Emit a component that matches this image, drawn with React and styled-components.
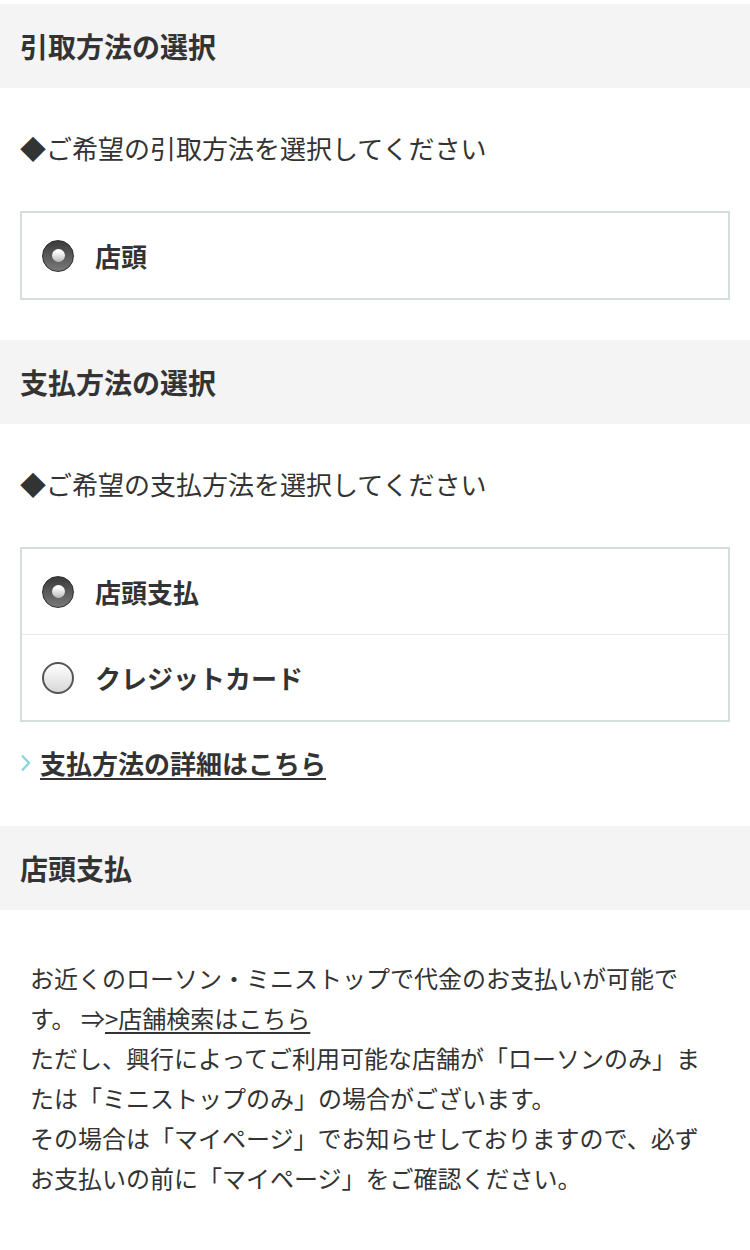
import React, { useState } from 'react'
import styled, { createGlobalStyle } from 'styled-components'

const GlobalStyle = createGlobalStyle`
  body {
    margin: 0;
    background: #fff;
    color: #333;
    font-family: "Noto Sans CJK JP", "Noto Sans", sans-serif;
  }
`

const Page = styled.div`
  padding-top: 4px;
  width: 750px;
`

const SectionHeader = styled.h2`
  margin: 0;
  height: 84px;
  padding: 0 20px;
  display: flex;
  align-items: center;
  background: #f4f4f4;
  font-size: 28px;
  font-weight: 700;
  color: #333;
`

const Prompt = styled.p`
  margin: 0;
  padding: 40px 20px 44px;
  font-size: 26px;
  line-height: 39px;
  font-weight: 400;
  color: #333;
`

const OptionBox = styled.div`
  margin: 0 20px ${(p) => (p.$last ? '40px' : '21px')};
  border: 2px solid #d3dedd;
  display: flex;
  flex-direction: column;
`

const OptionRow = styled.label`
  height: 85px;
  padding: 0 20px;
  display: flex;
  align-items: center;
  gap: 21px;
  font-size: 26px;
  font-weight: 700;
  color: #333;
  cursor: pointer;

  & + & {
    border-top: 1px solid #ebebeb;
  }
`

const Radio = styled.span`
  width: 32px;
  height: 32px;
  box-sizing: border-box;
  border-radius: 50%;
  display: flex;
  align-items: center;
  justify-content: center;
  flex-shrink: 0;
  border: ${(p) => (p.$checked ? '1px solid #2e2e2e' : '2px solid #555')};
  background: ${(p) =>
    p.$checked
      ? 'linear-gradient(to bottom, #3a3a3a, #7a7a7a)'
      : 'linear-gradient(to bottom, #ffffff, #d8d8d8)'};

  &::after {
    content: '';
    display: ${(p) => (p.$checked ? 'block' : 'none')};
    width: 13px;
    height: 13px;
    border-radius: 50%;
    background: linear-gradient(to bottom, #ffffff 20%, #b8b8b8);
  }
`

const DetailLink = styled.a`
  margin: 0 20px 44px;
  display: flex;
  align-items: center;
  gap: 9px;
  font-size: 26px;
  line-height: 39px;
  font-weight: 700;
  color: #333;
  text-decoration: underline;
  text-underline-offset: 4px;
  text-decoration-thickness: 2px;
`

const Chevron = () => (
  <svg width="11" height="18" viewBox="0 0 11 18" style={{ flexShrink: 0 }}>
    <path d="M2 1.5 L9 9 L2 16.5" fill="none" stroke="#8fd3df" strokeWidth="2.4" />
  </svg>
)

const Body = styled.div`
  padding: 48px 30px 52px;
  width: 690px;
  box-sizing: content-box;
  font-size: 24px;
  line-height: 40px;
  font-weight: 400;
  color: #333;
`

const StoreLink = styled.a`
  color: #333;
  text-decoration: underline;
  text-underline-offset: 4px;
`

const App = () => {
  const [pickup] = useState('store')
  const [pay, setPay] = useState('store')

  return (
    <Page>
      <GlobalStyle />
      <SectionHeader>引取方法の選択</SectionHeader>
      <Prompt>◆ご希望の引取方法を選択してください</Prompt>
      <OptionBox $last>
        <OptionRow>
          <Radio $checked={pickup === 'store'} />
          店頭
        </OptionRow>
      </OptionBox>

      <SectionHeader>支払方法の選択</SectionHeader>
      <Prompt>◆ご希望の支払方法を選択してください</Prompt>
      <OptionBox>
        <OptionRow onClick={() => setPay('store')}>
          <Radio $checked={pay === 'store'} />
          店頭支払
        </OptionRow>
        <OptionRow onClick={() => setPay('card')}>
          <Radio $checked={pay === 'card'} />
          クレジットカード
        </OptionRow>
      </OptionBox>
      <DetailLink href="#">
        <Chevron />
        <span>支払方法の詳細はこちら</span>
      </DetailLink>

      <SectionHeader>店頭支払</SectionHeader>
      <Body>
        お近くのローソン・ミニストップで代金のお支払いが可能です。 ⇒<StoreLink href="#">&gt;店舗検索はこちら</StoreLink>
        <br />
        ただし、興行によってご利用可能な店舗が「ローソンのみ」または「ミニストップのみ」の場合がございます。
        <br />
        その場合は「マイページ」でお知らせしておりますので、必ずお支払いの前に「マイページ」をご確認ください。
      </Body>
    </Page>
  )
}

export default App
